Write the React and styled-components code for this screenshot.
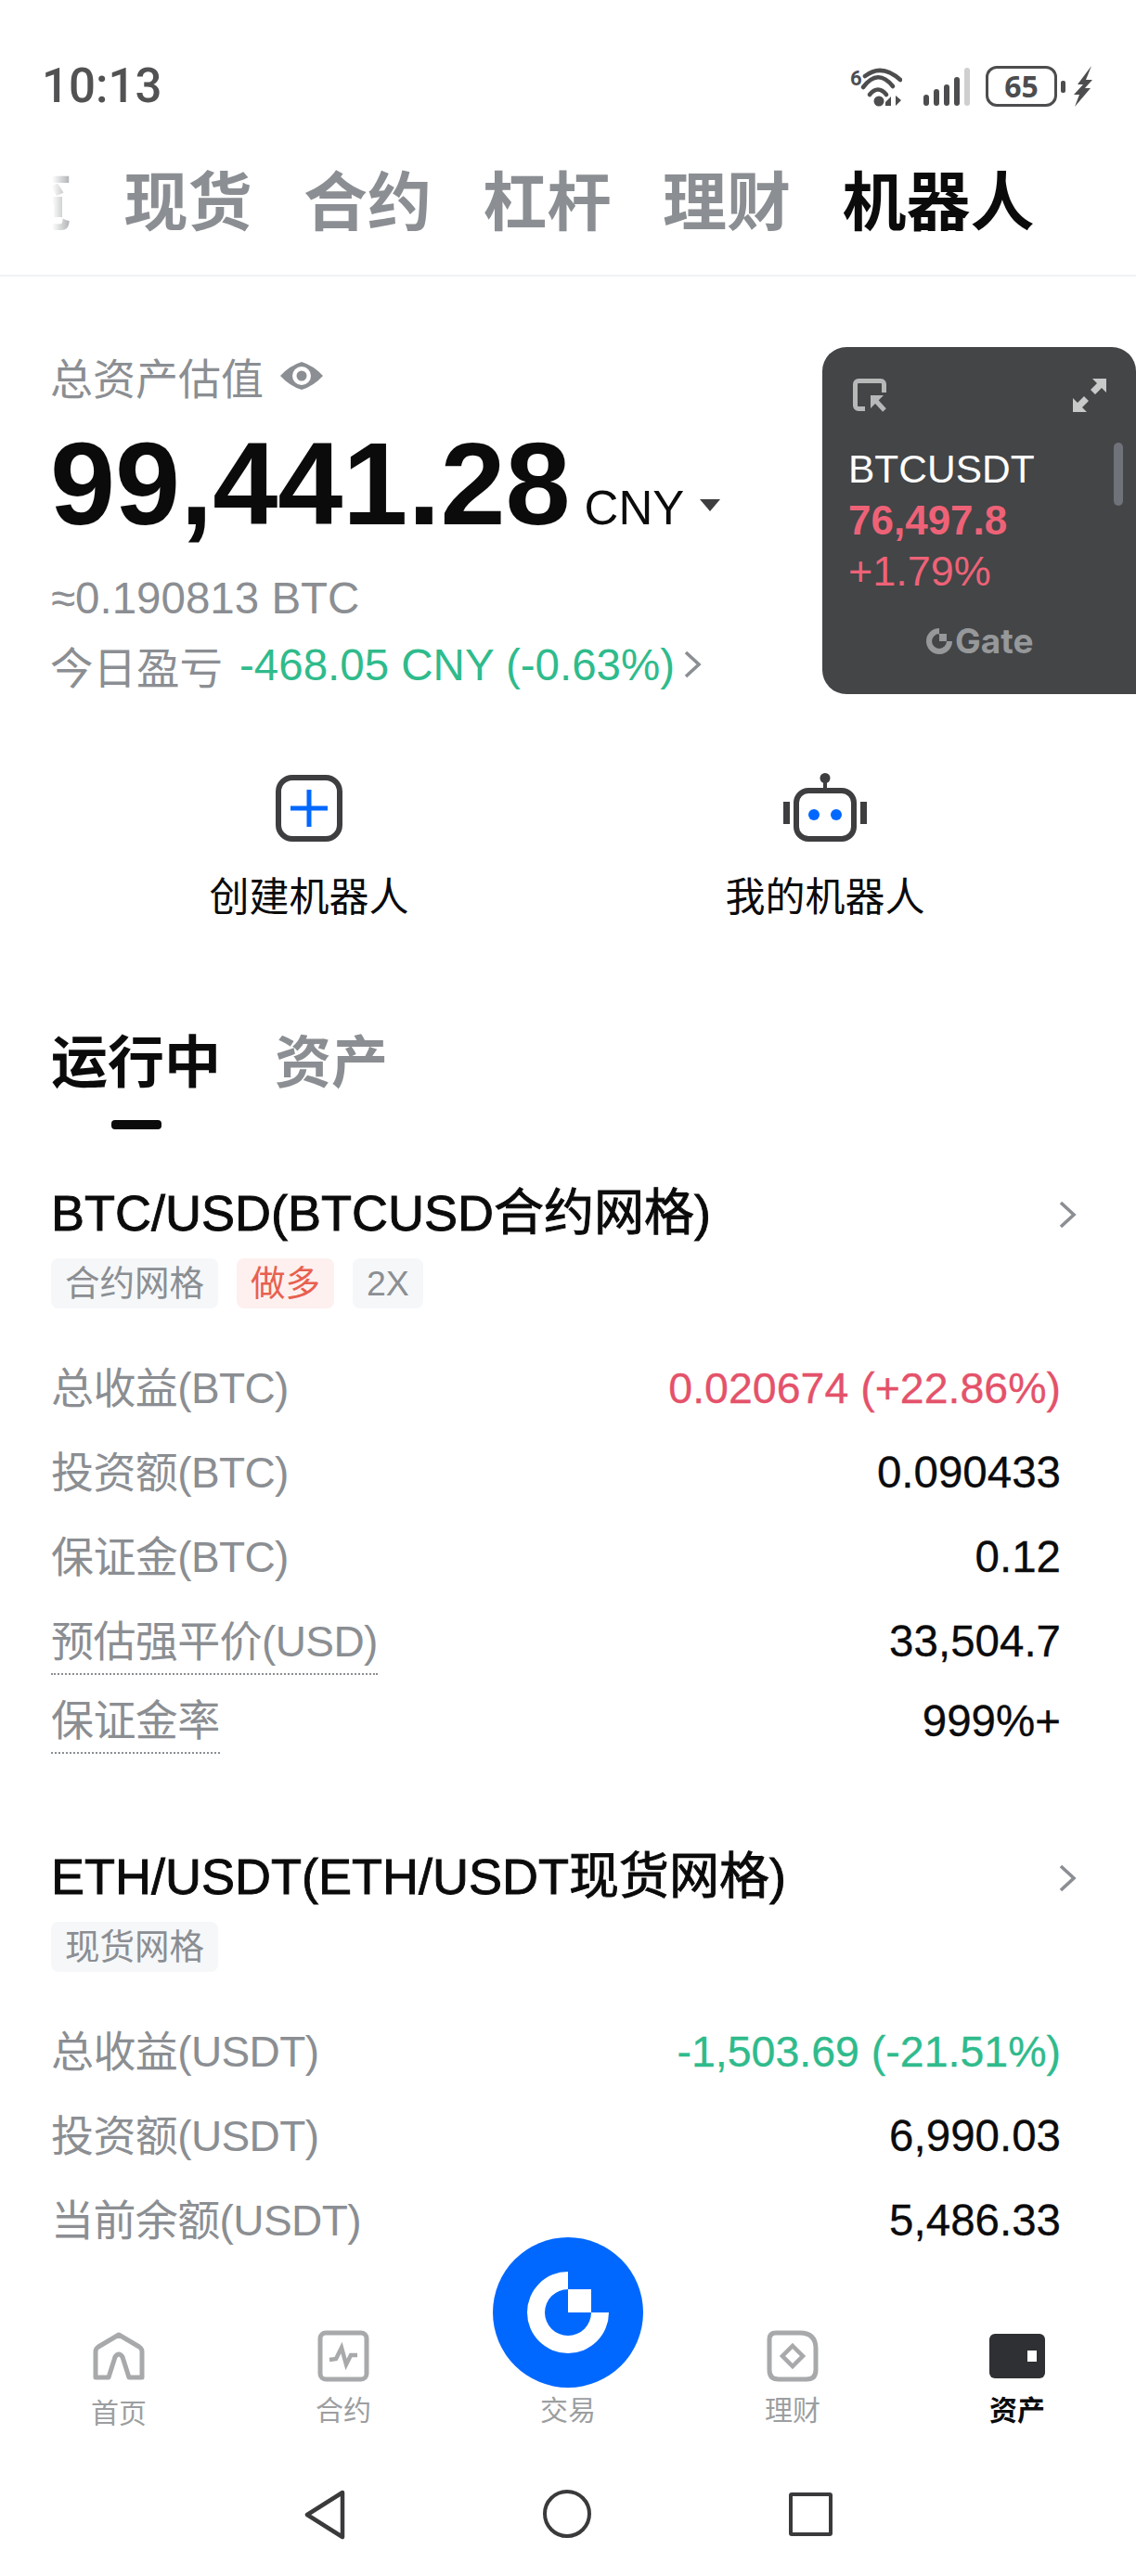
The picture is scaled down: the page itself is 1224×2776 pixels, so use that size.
import React from "react";
import styled, { createGlobalStyle } from "styled-components";

const GlobalStyle = createGlobalStyle`
  html, body {
    margin: 0;
    padding: 0;
    background: #fff;
  }
  * {
    box-sizing: border-box;
  }
`;

const FONT = `"Liberation Sans", "Noto Sans CJK SC", sans-serif`;
const GREY = "#8b8e92";
const GREEN = "#2fbb8c";
const RED = "#e4526a";
const BLUE = "#0068ff";

const grids = [
  {
    title: "BTC/USD(BTCUSD合约网格)",
    tags: [{ text: "合约网格" }, { text: "做多", red: true }, { text: "2X" }],
    rows: [
      { label: "总收益(BTC)", value: "0.020674 (+22.86%)", color: RED },
      { label: "投资额(BTC)", value: "0.090433" },
      { label: "保证金(BTC)", value: "0.12" },
      { label: "预估强平价(USD)", value: "33,504.7", dotted: true },
      { label: "保证金率", value: "999%+", dotted: true, short: true },
    ],
  },
  {
    title: "ETH/USDT(ETH/USDT现货网格)",
    tags: [{ text: "现货网格" }],
    rows: [
      { label: "总收益(USDT)", value: "-1,503.69 (-21.51%)", color: GREEN },
      { label: "投资额(USDT)", value: "6,990.03" },
      { label: "当前余额(USDT)", value: "5,486.33" },
    ],
  },
];

const GateMark = ({ size, color }) => (
  <svg width={size} height={size} viewBox="-44 -44 88 88">
    <path
      fill={color}
      d="M0 -44A44 44 0 1 0 44 0H25A25 25 0 1 1 0 -25ZM0 -25H25V0H0Z"
    />
  </svg>
);

const Chevron = () => (
  <svg width="22" height="32" viewBox="0 0 22 32" fill="none">
    <path d="M4 3l14 13L4 29" stroke="#8b8e92" strokeWidth="3.6" />
  </svg>
);

const WifiIcon = () => (
  <svg width="56" height="44" viewBox="0 0 56 44" fill="none">
    <text x="0" y="21" fontFamily="Roboto, sans-serif" fontWeight="700" fontSize="22" fill="#4d4d4f">6</text>
    <g stroke="#4d4d4f" strokeWidth="4.6" strokeLinecap="round">
      <path d="M16 11Q34 -3 54 15" />
      <path d="M14 23Q30 2 46 22" />
      <path d="M21 31Q30 20 39 31" />
    </g>
    <circle cx="31" cy="38" r="5.5" fill="#4d4d4f" />
    <path d="M38 39l6-6v10h-6zM49 32v11l6-6z" fill="#4d4d4f" />
  </svg>
);

const SignalIcon = () => (
  <svg width="50" height="41" viewBox="0 0 50 41">
    <rect x="0" y="29" width="6" height="12" rx="3" fill="#4d4d4f" />
    <rect x="11" y="23" width="6" height="18" rx="3" fill="#4d4d4f" />
    <rect x="22" y="18" width="6" height="23" rx="3" fill="#4d4d4f" />
    <rect x="33" y="10" width="6" height="31" rx="3" fill="#4d4d4f" />
    <rect x="44" y="0" width="6" height="41" rx="3" fill="#cfcfcf" />
  </svg>
);

const BoltIcon = () => (
  <svg width="20" height="44" viewBox="0 0 20 44">
    <path d="M19 0L4 20h6L0 31h6L1 44 18 24h-6l8-9h-7z" fill="#4d4d4f" />
  </svg>
);

const EyeIcon = () => (
  <svg width="46" height="30" viewBox="0 0 46 30">
    <path fill="#8b8e92" d="M0 15Q10 4 23 0Q36 4 46 15Q36 26 23 30Q10 26 0 15Z" />
    <circle cx="23" cy="15" r="10" fill="#fff" />
    <circle cx="23" cy="15" r="5.5" fill="#8b8e92" />
  </svg>
);

const PipIcon = () => (
  <svg width="36" height="36" viewBox="0 0 36 36" fill="none" stroke="#b7b9b9">
    <path d="M13 32.5H6a3.5 3.5 0 0 1-3.5-3.5V6A3.5 3.5 0 0 1 6 2.5h24A3.5 3.5 0 0 1 33.5 6v9" strokeWidth="5" />
    <path d="M22 21l12 13" strokeWidth="5" />
    <path d="M19 32V18h14z" fill="#b7b9b9" strokeWidth="0" />
  </svg>
);

const ExpandIcon = () => (
  <svg width="36" height="36" viewBox="0 0 36 36" fill="#c8c9c9">
    <path d="M21 0h15v15l-5-5-7 7-5-5 7-7zM15 36H0V21l5 5 7-7 5 5-7 7z" />
  </svg>
);

const PlusIcon = () => (
  <svg width="72" height="72" viewBox="0 0 72 72" fill="none">
    <rect x="3" y="3" width="66" height="66" rx="15" stroke="#3e3e40" strokeWidth="6" />
    <path d="M36 16v40M16 36h40" stroke={BLUE} strokeWidth="5" />
  </svg>
);

const RobotIcon = () => (
  <svg width="90" height="74" viewBox="0 0 90 74" fill="none">
    <circle cx="45" cy="5.5" r="5.5" fill="#3e3e40" />
    <path d="M45 8v10" stroke="#3e3e40" strokeWidth="4" />
    <rect x="14" y="19" width="62" height="52" rx="13" stroke="#3e3e40" strokeWidth="6" />
    <rect x="0" y="31" width="7" height="24" fill="#3e3e40" />
    <rect x="83" y="31" width="7" height="24" fill="#3e3e40" />
    <circle cx="33" cy="45" r="6" fill={BLUE} />
    <circle cx="57" cy="45" r="6" fill={BLUE} />
  </svg>
);

const HomeIcon = () => (
  <svg width="56" height="52" viewBox="0 0 56 52" fill="none">
    <path
      d="M3 49V21q0-3 3-5L28 3l22 13q3 2 3 5v28H39l-7-22q-4-6-8 0l-7 22z"
      stroke="#a8a9ab"
      strokeWidth="5"
      strokeLinejoin="round"
    />
  </svg>
);

const ContractIcon = () => (
  <svg width="56" height="56" viewBox="0 0 56 56" fill="none">
    <rect x="3" y="3" width="50" height="50" rx="6" stroke="#a8a9ab" strokeWidth="5" />
    <path d="M13 32l7-1 6-12 5 18 5-10h7" stroke="#a8a9ab" strokeWidth="4.5" />
  </svg>
);

const FinanceIcon = () => (
  <svg width="56" height="56" viewBox="0 0 56 56" fill="none">
    <path
      d="M10 3h26q17 0 17 17v23q0 10-10 10H13Q3 53 3 43V10q0-7 7-7z"
      stroke="#a8a9ab"
      strokeWidth="5"
    />
    <path d="M28 17l11 11-11 11-11-11z" stroke="#a8a9ab" strokeWidth="4.5" />
  </svg>
);

const AssetsIcon = () => (
  <svg width="60" height="48" viewBox="0 0 60 48">
    <rect width="60" height="48" rx="6" fill="#2f3033" />
    <rect x="41" y="18" width="10" height="12" fill="#fff" />
  </svg>
);

const navItems = [
  { label: "首页", icon: <HomeIcon />, low: true },
  { label: "合约", icon: <ContractIcon /> },
  { label: "交易" },
  { label: "理财", icon: <FinanceIcon /> },
  { label: "资产", icon: <AssetsIcon />, active: true },
];

const App = () => {
  return (
    <Page>
      <GlobalStyle />
      <StatusBar>
        <Clock>10:13</Clock>
        <StatusIcons>
          <WifiIcon />
          <SignalWrap>
            <SignalIcon />
          </SignalWrap>
          <Battery>
            <BatteryBody>65</BatteryBody>
            <BatteryTip />
          </Battery>
          <BoltIcon />
        </StatusIcons>
      </StatusBar>

      <TopTabs>
        <TopTabStrip>
          {["总览", "现货", "合约", "杠杆", "理财"].map((t) => (
            <TopTab key={t}>{t}</TopTab>
          ))}
          <TopTab $active>机器人</TopTab>
        </TopTabStrip>
        <TopTabFade />
      </TopTabs>

      <Content>
        <Hero>
          <HeroLabel>
            总资产估值
            <EyeIcon />
          </HeroLabel>
          <Amount>
            <big>99,441.28</big>
            <span>CNY</span>
            <Caret />
          </Amount>
          <BtcLine>≈0.190813 BTC</BtcLine>
          <TodayLine>
            今日盈亏
            <TodayValue>-468.05 CNY (-0.63%)</TodayValue>
            <Chevron />
          </TodayLine>
        </Hero>

        <Actions>
          <Action>
            <ActionIcon>
              <PlusIcon />
            </ActionIcon>
            创建机器人
          </Action>
          <Action>
            <ActionIcon>
              <RobotIcon />
            </ActionIcon>
            我的机器人
          </Action>
        </Actions>

        <SubTabs>
          <SubTab $active>
            运行中
            <SubTabBar />
          </SubTab>
          <SubTab>资产</SubTab>
        </SubTabs>

        {grids.map((grid) => (
          <GridCard key={grid.title}>
            <GridTitle>
              {grid.title}
              <TitleChevron>
                <Chevron />
              </TitleChevron>
            </GridTitle>
            <TagRow>
              {grid.tags.map((tag) => (
                <Tag key={tag.text} $red={tag.red}>
                  {tag.text}
                </Tag>
              ))}
            </TagRow>
            <Rows>
              {grid.rows.map((row) => (
                <Row key={row.label} $short={row.short}>
                  <RowLabel $dotted={row.dotted}>{row.label}</RowLabel>
                  <RowValue $color={row.color}>{row.value}</RowValue>
                </Row>
              ))}
            </Rows>
          </GridCard>
        ))}
      </Content>

      <MiniTicker>
        <TickerIcons>
          <PipIcon />
          <ExpandIcon />
        </TickerIcons>
        <TickerSymbol>BTCUSDT</TickerSymbol>
        <TickerPrice>76,497.8</TickerPrice>
        <TickerChange>+1.79%</TickerChange>
        <TickerBrand>
          <GateMark size={28} color="#96989a" />
          Gate
        </TickerBrand>
        <TickerScroll />
      </MiniTicker>

      <TabBar>
        {navItems.map((item) => (
          <NavItem key={item.label} $active={item.active}>
            <NavIcon>{item.icon}</NavIcon>
            <NavLabel $low={item.low}>{item.label}</NavLabel>
          </NavItem>
        ))}
        <TradeButton>
          <GateMark size={88} color="#fff" />
        </TradeButton>
      </TabBar>

      <SystemNav>
        <svg width="44" height="54" viewBox="0 0 44 54" fill="none">
          <path d="M41 3L3 27l38 24z" stroke="#3a3a3c" strokeWidth="4.5" strokeLinejoin="round" />
        </svg>
        <SystemCircle />
        <SystemSquare />
      </SystemNav>
    </Page>
  );
};

const Page = styled.div`
  position: relative;
  width: 1224px;
  height: 2776px;
  overflow: hidden;
  display: flex;
  flex-direction: column;
  background: #fff;
  font-family: ${FONT};
  color: #0b0b0c;
`;

const StatusBar = styled.div`
  flex: none;
  height: 122px;
  padding: 64px 47px 0 45px;
  display: flex;
  justify-content: space-between;
  align-items: center;
`;
const Clock = styled.div`
  height: 58px;
  line-height: 58px;
  font-family: Roboto, sans-serif;
  font-weight: 500;
  font-size: 51px;
  color: #525254;
`;
const StatusIcons = styled.div`
  display: flex;
  align-items: center;
  gap: 23px;
`;
const SignalWrap = styled.div`
  display: flex;
  margin-right: -6px;
`;
const Battery = styled.div`
  display: flex;
  align-items: center;
  gap: 4px;
  margin-right: -14px;
`;
const BatteryBody = styled.div`
  width: 77px;
  height: 44px;
  border: 3.5px solid #4d4d4f;
  border-radius: 12px;
  text-align: center;
  line-height: 37px;
  font-family: "Open Sans", sans-serif;
  font-weight: 700;
  font-size: 32px;
  color: #4d4d4f;
`;
const BatteryTip = styled.div`
  width: 5px;
  height: 13px;
  border-radius: 2px;
  background: #4d4d4f;
`;

const TopTabs = styled.div`
  position: relative;
  flex: none;
  height: 176px;
  padding-top: 21px;
  border-bottom: 2px solid #f1f2f3;
  overflow: hidden;
`;
const TopTabStrip = styled.div`
  display: flex;
  gap: 55.5px;
  margin-left: -60px;
`;
const TopTab = styled.div`
  flex: none;
  font-size: 69px;
  line-height: 153px;
  font-weight: 700;
  color: ${(p) => (p.$active ? "#0b0b0c" : "#8b8e92")};
`;
const TopTabFade = styled.div`
  position: absolute;
  left: 0;
  top: 0;
  bottom: 0;
  width: 78px;
  background: linear-gradient(to right, #fff 72%, rgba(255, 255, 255, 0.2));
`;

const Content = styled.div`
  flex: 1;
  min-height: 0;
  overflow: hidden;
  padding: 77px 81px 0 55px;
`;
const Hero = styled.div`
  display: flex;
  flex-direction: column;
`;
const HeroLabel = styled.div`
  display: flex;
  align-items: center;
  gap: 18px;
  height: 60px;
  margin-left: -1px;
  font-size: 46px;
  color: ${GREY};
`;
const Amount = styled.div`
  display: flex;
  align-items: baseline;
  height: 130px;
  margin-top: 22px;
  margin-left: -1px;
  line-height: 130px;
  big {
    font-size: 126px;
    font-weight: 700;
  }
  span {
    margin-left: 15px;
    font-size: 51px;
  }
`;
const Caret = styled.i`
  width: 0;
  height: 0;
  margin-left: 17px;
  align-self: center;
  border-left: 11px solid transparent;
  border-right: 11px solid transparent;
  border-top: 13px solid #3e3e40;
  transform: translateY(22px);
`;
const BtcLine = styled.div`
  height: 60px;
  margin-top: 28px;
  line-height: 60px;
  font-size: 47.5px;
  color: ${GREY};
`;
const TodayLine = styled.div`
  display: flex;
  align-items: center;
  height: 60px;
  margin-top: 11px;
  margin-left: -1px;
  font-size: 46.5px;
  color: ${GREY};
`;
const TodayValue = styled.span`
  margin: 0 8px 0 18px;
  font-size: 47.5px;
  color: ${GREEN};
`;

const Actions = styled.div`
  display: grid;
  grid-template-columns: 1fr 1fr;
  width: 1112px;
  margin-top: 87px;
`;
const Action = styled.div`
  display: flex;
  flex-direction: column;
  align-items: center;
  gap: 30px;
  font-size: 43px;
  line-height: 60px;
`;
const ActionIcon = styled.div`
  display: flex;
  align-items: flex-end;
  height: 74px;
`;

const SubTabs = styled.div`
  display: flex;
  gap: 58px;
  height: 112px;
  margin-top: 106px;
`;
const SubTab = styled.div`
  position: relative;
  font-size: 61px;
  line-height: 86px;
  font-weight: 700;
  color: ${(p) => (p.$active ? "#0b0b0c" : "#8b8e92")};
`;
const SubTabBar = styled.div`
  position: absolute;
  left: 65px;
  top: 104px;
  width: 54px;
  height: 10px;
  border-radius: 4px;
  background: #0b0b0c;
`;

const GridCard = styled.div`
  margin-top: 52px;
  & + & {
    margin-top: 88px;
  }
`;
const GridTitle = styled.div`
  display: flex;
  justify-content: space-between;
  align-items: center;
  height: 70px;
  font-size: 54px;
  -webkit-text-stroke: 0.9px #0b0b0c;
`;
const TitleChevron = styled.div`
  display: flex;
  margin-right: -18px;
  transform: translateY(7px);
`;
const TagRow = styled.div`
  display: flex;
  gap: 20px;
  margin-top: 19px;
`;
const Tag = styled.div`
  height: 54px;
  padding: 0 15px;
  border-radius: 8px;
  line-height: 54px;
  font-size: 37.5px;
  color: ${(p) => (p.$red ? "#e8604f" : "#8b8e92")};
  background: ${(p) => (p.$red ? "#fdf0ef" : "#f5f7f9")};
`;
const Rows = styled.div`
  margin-top: 40px;
`;
const Row = styled.div`
  display: flex;
  justify-content: space-between;
  align-items: center;
  height: ${(p) => (p.$short ? "80px" : "91px")};
`;
const RowLabel = styled.div`
  height: ${(p) => (p.$dotted ? "66px" : "60px")};
  line-height: 60px;
  font-size: 46px;
  letter-spacing: -0.6px;
  color: ${GREY};
  transform: translateY(${(p) => (p.$dotted ? "3px" : "0")});
  border-bottom: ${(p) => (p.$dotted ? `2px dotted ${GREY}` : "none")};
`;
const RowValue = styled.div`
  font-size: ${(p) => (p.$color ? "46.5px" : "47.5px")};
  color: ${(p) => p.$color || "#0b0b0c"};
  -webkit-text-stroke: 0.3px ${(p) => p.$color || "#0b0b0c"};
`;

const MiniTicker = styled.div`
  position: absolute;
  top: 374px;
  left: 886px;
  width: 338px;
  height: 374px;
  padding: 34px 0 0 28px;
  border-radius: 26px 26px 0 26px;
  background: #434547;
  color: #fff;
`;
const TickerIcons = styled.div`
  display: flex;
  justify-content: space-between;
  width: 273px;
  margin: 0 0 34px 5px;
`;
const TickerSymbol = styled.div`
  font-size: 42.5px;
  line-height: 56px;
`;
const TickerPrice = styled.div`
  font-size: 44px;
  line-height: 54px;
  font-weight: 700;
  color: #ee6277;
`;
const TickerChange = styled.div`
  font-size: 45px;
  line-height: 56px;
  color: #ee6277;
`;
const TickerBrand = styled.div`
  display: flex;
  align-items: center;
  gap: 3px;
  margin: 27px 0 0 84px;
  font-family: Inter, sans-serif;
  font-weight: 700;
  font-size: 37px;
  line-height: 40px;
  color: #96989a;
`;
const TickerScroll = styled.div`
  position: absolute;
  top: 103px;
  right: 14px;
  width: 10px;
  height: 68px;
  border-radius: 5px;
  background: #70727a;
`;

const TabBar = styled.div`
  position: relative;
  flex: none;
  height: 228px;
  padding: 86px 7px 0;
  display: grid;
  grid-template-columns: repeat(5, 1fr);
  background: #fff;
`;
const NavItem = styled.div`
  display: flex;
  flex-direction: column;
  align-items: center;
  font-size: 30px;
  line-height: 40px;
  font-weight: ${(p) => (p.$active ? 700 : 400)};
  color: ${(p) => (p.$active ? "#0b0b0c" : "#9c9ea0")};
`;
const NavIcon = styled.div`
  display: flex;
  align-items: center;
  height: 56px;
`;
const NavLabel = styled.div`
  margin-top: ${(p) => (p.$low ? "14px" : "11px")};
`;
const TradeButton = styled.div`
  position: absolute;
  left: 531px;
  top: -14px;
  width: 162px;
  height: 162px;
  border-radius: 50%;
  background: ${BLUE};
  display: flex;
  justify-content: center;
  align-items: center;
`;

const SystemNav = styled.div`
  flex: none;
  height: 123px;
  padding-top: 30px;
  display: flex;
  justify-content: center;
  align-items: flex-start;
  gap: 213px;
`;
const SystemCircle = styled.div`
  width: 52px;
  height: 52px;
  border: 4.5px solid #3a3a3c;
  border-radius: 50%;
`;
const SystemSquare = styled.div`
  width: 47px;
  height: 47px;
  margin-top: 3px;
  border: 4.5px solid #3a3a3c;
  border-radius: 3px;
`;

export default App;
